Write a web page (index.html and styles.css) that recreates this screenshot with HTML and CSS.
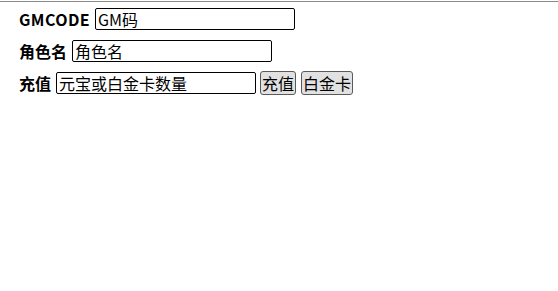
FILE: index.html
```html
<!DOCTYPE html>
<html lang="zh-CN">

<head>
    <meta charset="UTF-8">
    <meta name="viewport" content="width=device-width, initial-scale=1.0">
    <link rel="stylesheet" href="styles.css">
    <title>GM</title>
</head>

<body>
    <div class="page">
        <div class="row">
            <label class="code">GMCODE</label>
            <input class="field" type="text" placeholder="GM码">
        </div>
        <div class="row">
            <label>角色名</label>
            <input class="field" type="text" placeholder="角色名">
        </div>
        <div class="row">
            <label>充值</label>
            <input class="field" type="text" placeholder="元宝或白金卡数量">
            <button class="btn">充值</button>
            <button class="btn">白金卡</button>
        </div>
    </div>
</body>

</html>
```

FILE: styles.css
```css
* {
    margin: 0;
    padding: 0;
    box-sizing: border-box;
}

body {
    background-color: #fff;
    font-family: "Noto Sans CJK SC", "Noto Sans", sans-serif;
    font-size: 16px;
    color: #000;
}

.page {
    border-top: 1px solid #8a8a8a;
    margin-top: 1px;
    padding: 1px 19px;
}

.row {
    display: flex;
    align-items: center;
    height: 32px;
}

label {
    font-weight: bold;
    margin-right: 5px;
}

.code {
    letter-spacing: 0.4px;
}

.field {
    width: 200px;
    height: 22px;
    border: 1px solid #000;
    border-radius: 2px;
    padding: 0 2px;
    font-family: inherit;
    font-size: 16px;
    line-height: 20px;
}

.field::placeholder {
    color: #000;
}

.btn {
    height: 24px;
    margin-left: 4px;
    padding: 0 1px;
    font-family: inherit;
    font-size: 16px;
    line-height: 20px;
    background-color: #e1e1e1;
    border: 1px solid #5a5a5a;
    border-radius: 3px;
}

.btn + .btn {
    margin-left: 5px;
}
```
